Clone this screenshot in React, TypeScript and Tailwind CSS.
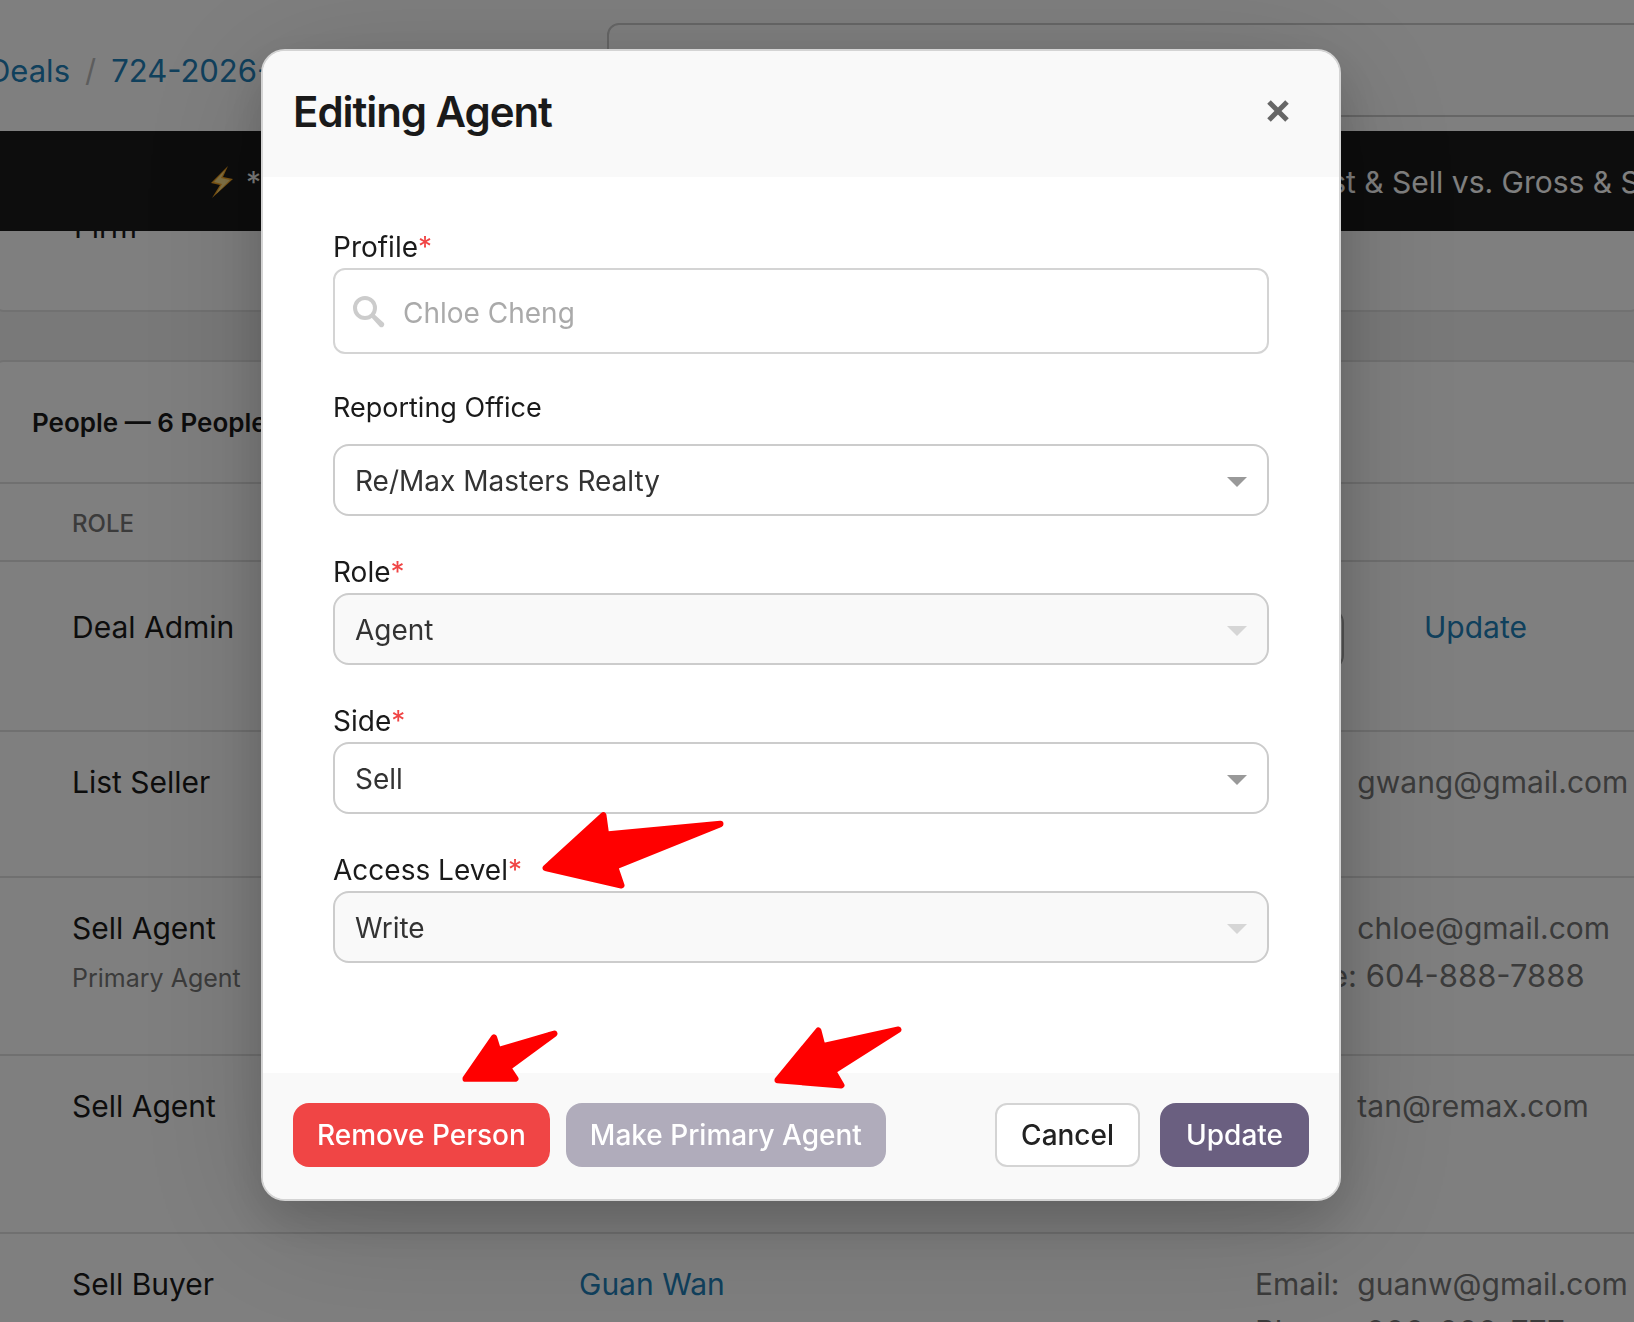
import React from "react";

interface FieldProps {
  id: string;
  label: string;
  required?: boolean;
  children: React.ReactNode;
}

interface SelectProps {
  id: string;
  value: string;
  disabled?: boolean;
}

interface ArrowProps {
  viewBox: string;
  points: string;
  className: string;
}

interface Person {
  role: string;
  note?: string;
  name: string;
  email: string;
  phone: string;
}

const people: Person[] = [
  { role: "List Seller", name: "", email: "gwang@gmail.com", phone: "" },
  {
    role: "Sell Agent",
    note: "Primary Agent",
    name: "",
    email: "chloe@gmail.com",
    phone: "604-888-7888",
  },
  { role: "Sell Agent", name: "", email: "tan@remax.com", phone: "" },
  {
    role: "Sell Buyer",
    name: "Guan Wan",
    email: "guanw@gmail.com",
    phone: "000-000-777",
  },
];

const Field: React.FC<FieldProps> = ({ id, label, required, children }) => (
  <div>
    <label
      htmlFor={id}
      className={
        required
          ? "block text-[28px] leading-[41px] text-[#1a1a1a]"
          : "block mb-[18px] text-[27px] leading-9 text-[#1a1a1a]"
      }
    >
      {label}
      {required && <span className="text-[#f04545]">*</span>}
    </label>
    {children}
  </div>
);

const Select: React.FC<SelectProps> = ({ id, value, disabled }) => (
  <div className="relative">
    <select
      id={id}
      disabled={disabled}
      className="block w-full h-[72px] pl-5 pr-16 pt-0.5 appearance-none rounded-2xl border-2 border-[#ccc] bg-white text-[28px] text-[#333] opacity-100 disabled:bg-[#f9f9f9]"
    >
      <option>{value}</option>
    </select>
    <svg
      viewBox="0 0 20 10"
      className={
        disabled
          ? "absolute right-[22px] top-[33px] w-5 h-2.5 fill-[#d6d6d6] pointer-events-none"
          : "absolute right-[22px] top-[33px] w-5 h-2.5 fill-[#999] pointer-events-none"
      }
    >
      <path d="M0 0h20L10 10z" />
    </svg>
  </div>
);

const Arrow: React.FC<ArrowProps> = ({ viewBox, points, className }) => (
  <svg viewBox={viewBox} className={className}>
    <polygon
      points={points}
      fill="#f00"
      stroke="#f00"
      strokeWidth="19"
      strokeLinejoin="round"
    />
  </svg>
);

const DealPage: React.FC = () => (
  <div className="h-screen overflow-hidden bg-[#f2f2f2] text-[30px] leading-[48px] text-[#1a1a1a]">
    {/* Breadcrumb and search */}
    <header className="flex items-center h-[131px] bg-white">
      <nav className="flex shrink-0 w-[607px] -ml-4 pt-2.5 text-[31px] whitespace-nowrap">
        <a href="#deals" className="flex justify-end w-[86px] text-[#2180b9]">
          Deals
        </a>
        <span className="px-[15px] text-[#bbb]">/</span>
        <a href="#deal" className="text-[#2180b9]">
          724-2026-0001
        </a>
      </nav>
      <input
        aria-label="Search"
        className="grow h-[94px] ml-4 mt-2 -mr-4 rounded-xl border-2 border-[#ccc] bg-white"
      />
    </header>

    {/* Announcement */}
    <div className="flex items-center h-[100px] pt-0.5 bg-[#1a1a1a] text-white whitespace-nowrap overflow-hidden">
      <svg viewBox="0 0 24 32" className="shrink-0 w-6 h-8 ml-[210px] mr-3">
        <path d="M18 0 1 17l9 2L2 32 23 13l-10-2z" fill="#f6a623" />
        <path d="M15 4 4 16l8 2-6 10 14-14-9-2z" fill="#ffe28a" />
      </svg>
      <span className="shrink-0 w-[1060px]">**</span>
      <span>List &amp; Sell vs. Gross &amp; Sell</span>
    </div>

    <section className="h-[81px] -mx-2 pl-20 overflow-hidden rounded-b-xl border-2 border-t-0 border-[#e2e2e2] bg-white">
      <p className="-mt-7">Firm</p>
    </section>

    {/* People */}
    <section className="mt-12 -mx-2 rounded-t-xl border-2 border-b-0 border-[#e2e2e2] bg-white">
      <h2 className="h-[120px] pl-[38px] text-[26px] leading-[122px] font-semibold">
        People — 6 People
      </h2>
      <table className="w-full table-fixed text-left">
        <colgroup>
          <col className="w-[585px]" />
          <col className="w-[676px]" />
          <col />
        </colgroup>
        <thead>
          <tr className="h-[78px] border-y-2 border-[#e0e0e0]">
            <th
              colSpan={3}
              className="pl-[78px] pt-[3px] text-2xl font-medium text-[#777]"
            >
              ROLE
            </th>
          </tr>
        </thead>
        <tbody>
          <tr className="h-[170px] border-b-2 border-[#e0e0e0] align-top">
            <td className="pl-[78px] pt-[41px]">Deal Admin</td>
            <td colSpan={2} className="pt-[41px]">
              <div className="flex">
                <select
                  aria-label="Deal admin"
                  className="w-[765px] h-16 mt-1 mr-20 appearance-none rounded-2xl border-2 border-[#aaa] bg-white"
                >
                  <option></option>
                </select>
                <a href="#update" className="text-[#2180b9]">
                  Update
                </a>
              </div>
            </td>
          </tr>
          {people.map((person, i) => (
            <tr
              key={i}
              className={
                i === 0
                  ? "h-[146px] border-b-2 border-[#e0e0e0] align-top"
                  : "h-[178px] border-b-2 border-[#e0e0e0] align-top"
              }
            >
              <td className="pl-[78px] pt-[26px]">
                {person.role}
                {person.note && (
                  <p className="text-[25px] leading-[52px] text-[#777]">
                    {person.note}
                  </p>
                )}
              </td>
              <td className="pt-[26px]">
                <a href="#person" className="text-[#2180b9]">
                  {person.name}
                </a>
              </td>
              <td className="pt-[26px] whitespace-nowrap text-[#777]">
                <div className="flex gap-[18px]">
                  <span>Email:</span>
                  <span>{person.email}</span>
                </div>
                {person.phone && (
                  <div className="text-[31px]">Phone: {person.phone}</div>
                )}
              </td>
            </tr>
          ))}
        </tbody>
      </table>
    </section>
  </div>
);

const EditAgentModal: React.FC = () => (
  <div className="fixed inset-0 pr-8 pt-[49px] bg-black/50">
    <div
      role="dialog"
      aria-labelledby="modal-title"
      className="relative w-full max-w-[1080px] mx-auto rounded-3xl border-2 border-[#d4d4d4] bg-white shadow-[0_20px_50px_rgba(0,0,0,0.16),0_20px_140px_rgba(0,0,0,0.16)]"
    >
      <header className="flex items-center justify-between h-[126px] pl-[30px] pr-[50px] pb-1.5 rounded-t-[22px] bg-[#f9f9f9]">
        <h1
          id="modal-title"
          className="text-[42px] font-semibold tracking-tight text-[#1a1a1a]"
        >
          Editing Agent
        </h1>
        <button aria-label="Close">
          <svg viewBox="0 0 22 22" className="w-[22px] h-[22px]">
            <path
              d="m2 2 18 18M20 2 2 20"
              stroke="#666"
              strokeWidth="5"
            />
          </svg>
        </button>
      </header>

      {/* Form */}
      <div className="flex flex-col gap-9 px-[70px] pt-[50px] pb-[110px]">
        <Field id="profile" label="Profile" required>
          <div className="relative">
            <input
              id="profile"
              placeholder="Chloe Cheng"
              className="block w-full h-[86px] pl-[68px] pr-5 pt-[3px] rounded-xl border-2 border-[#d4d4d4] bg-white text-[28px] placeholder:text-[#aaa]"
            />
            <svg viewBox="0 0 32 32" className="absolute left-5 top-7 w-8 h-8">
              <circle
                cx="12"
                cy="12"
                r="10"
                fill="none"
                stroke="#ccc"
                strokeWidth="4"
              />
              <path d="m18 21 3-3 10 9a3 3 0 0 1-4 4z" fill="#ccc" />
            </svg>
          </div>
        </Field>
        <Field id="office" label="Reporting Office">
          <Select id="office" value="Re/Max Masters Realty" />
        </Field>
        <Field id="role" label="Role" required>
          <Select id="role" value="Agent" disabled />
        </Field>
        <Field id="side" label="Side" required>
          <Select id="side" value="Sell" />
        </Field>
        <Field id="access" label="Access Level" required>
          <Select id="access" value="Write" disabled />
        </Field>
      </div>

      <footer className="flex h-[126px] px-[30px] pt-[30px] rounded-b-[22px] bg-[#f9f9f9] text-[28px] font-medium">
        <button className="h-16 px-6 rounded-2xl bg-[#f04545] text-white">
          Remove Person
        </button>
        <button className="h-16 ml-4 px-6 rounded-2xl bg-[#b0acbb] text-white">
          Make Primary Agent
        </button>
        <button className="h-16 ml-auto px-6 rounded-xl border-2 border-[#d4d4d4] bg-white text-[#222]">
          Cancel
        </button>
        <button className="h-16 ml-5 px-[26px] rounded-2xl bg-[#6a5f80] text-white">
          Update
        </button>
      </footer>

      {/* Annotation arrows */}
      <Arrow
        viewBox="300 60 558 240"
        points="317,234 490,76 498,134 841,102 525,230 544,286"
        className="absolute left-[277px] top-[759px] w-[186px] h-20"
      />
      <Arrow
        viewBox="60 720 300 165"
        points="77,866 162,743 174,781 343,731 204,833 226,866"
        className="absolute left-[197px] top-[979px] w-[100px] h-[55px]"
      />
      <Arrow
        viewBox="999 705 390 195"
        points="1013,870 1135,722 1147,769 1375,719 1179,843 1204,886"
        className="absolute left-[510px] top-[974px] w-[130px] h-[65px]"
      />
    </div>
  </div>
);

export default function App() {
  return (
    <div className="font-[Inter,sans-serif]">
      <DealPage />
      <EditAgentModal />
    </div>
  );
}
